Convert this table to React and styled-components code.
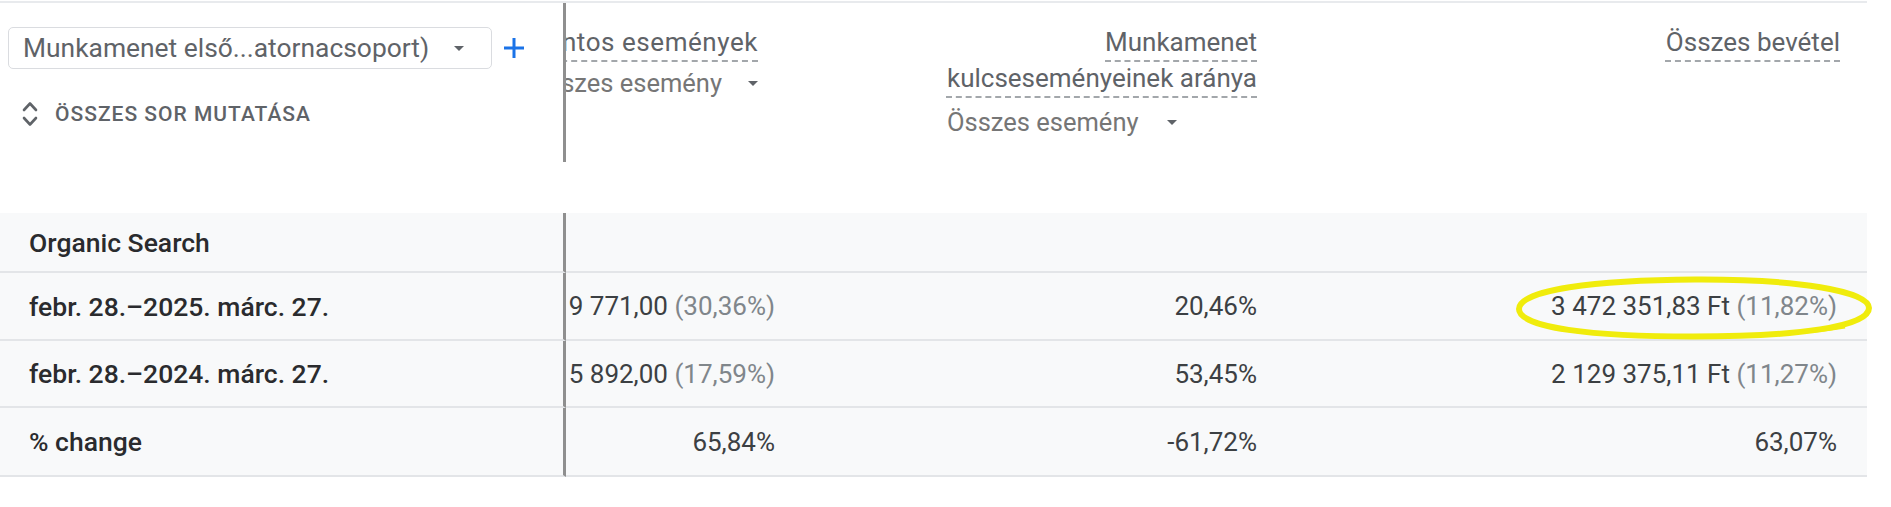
import React from "react";
import styled, { createGlobalStyle } from "styled-components";

const Global = createGlobalStyle`
  html, body { margin: 0; padding: 0; background: #ffffff; }
  body { font-family: Roboto, "Noto Sans", "Liberation Sans", Arial, sans-serif; }
  * { box-sizing: border-box; }
`;

const COLS = "566px 234px 482px 585px";

const Card = styled.div`
  width: 1867px;
  padding-top: 1px;
`;

const HeaderGrid = styled.div`
  display: grid;
  grid-template-columns: ${COLS};
  height: 161px;
  border-top: 2px solid #e8eaed;
`;

const StickyHead = styled.div`
  display: flex;
  flex-direction: column;
  padding: 24px 0 0 8px;
  border-right: 3px solid #8f8f8f;
`;

const PickerRow = styled.div`
  display: flex;
  align-items: center;
  gap: 11px;
`;

const Picker = styled.div`
  width: 484px;
  height: 42px;
  display: flex;
  align-items: center;
  justify-content: space-between;
  padding: 0 27px 0 14px;
  border: 1px solid #dadce0;
  border-radius: 5px;
  font-size: 26.4px;
  color: #5f6368;
  white-space: nowrap;
`;

const Caret = styled.span`
  display: inline-block;
  width: 0;
  height: 0;
  border-left: 5px solid transparent;
  border-right: 5px solid transparent;
  border-top: 5px solid #5f6368;
  margin-left: ${(p) => p.$ml || 0}px;
  flex-shrink: 0;
`;

const ShowAll = styled.div`
  margin-top: 31px;
  display: flex;
  align-items: center;
  gap: 17px;
  padding-left: 14px;
  font-size: 21px;
  font-weight: 500;
  letter-spacing: 1px;
  color: #5f6368;
  text-transform: uppercase;
`;

const HeadCell = styled.div`
  display: flex;
  justify-content: flex-end;
  align-items: flex-start;
  padding: 21px ${(p) => p.$pr}px 0 0;
  overflow: hidden;
`;

const HeadBlock = styled.div`
  display: flex;
  flex-direction: column;
  align-items: flex-start;
  flex-shrink: 0;
`;

const Title = styled.div`
  align-self: stretch;
  text-align: right;
  white-space: nowrap;
  font-size: 26px;
  font-weight: 400;
  line-height: 36px;
  letter-spacing: ${(p) => p.$track || 0}px;
  color: #5f6368;
  text-decoration: underline dashed #a3a7ab;
  text-decoration-thickness: 2px;
  text-underline-offset: 9px;
`;

const SubSelect = styled.div`
  display: flex;
  align-items: center;
  margin-top: ${(p) => p.$mt || 0}px;
  font-size: 25.5px;
  line-height: 36px;
  color: #767676;
  white-space: nowrap;
`;

const Spacer = styled.div`
  height: 51px;
`;

const Body = styled.div`
  background: #f8f9fa;
`;

const Row = styled.div`
  display: grid;
  grid-template-columns: ${COLS};
  height: ${(p) => p.$h}px;
`;

const LabelCell = styled.div`
  display: flex;
  align-items: center;
  padding-left: 29px;
  font-size: 26.5px;
  font-weight: 500;
  color: #2a2b2e;
  white-space: nowrap;
  border-right: 3px solid #8f8f8f;
  border-bottom: 2px solid #e3e5e8;
`;

const ValueCell = styled.div`
  display: flex;
  align-items: center;
  justify-content: flex-end;
  padding-right: ${(p) => p.$pr}px;
  overflow: ${(p) => (p.$clip ? "hidden" : "visible")};
  white-space: nowrap;
  font-size: 26px;
  color: #3c4043;
  border-bottom: 2px solid #e3e5e8;
`;

const ValueText = styled.span`
  position: relative;
  flex-shrink: 0;
`;

const Share = styled.span`
  color: #80868b;
`;

const Ring = styled.svg`
  position: absolute;
  left: -36px;
  top: -15px;
  width: 358px;
  height: 64px;
  overflow: visible;
  pointer-events: none;
`;

const PlusIcon = () => (
  <svg width="22" height="22" viewBox="0 0 22 22">
    <path d="M11 1 V21 M1 11 H21" stroke="#1a73e8" strokeWidth="3" fill="none" />
  </svg>
);

const UnfoldIcon = () => (
  <svg width="16" height="28" viewBox="0 0 16 28">
    <path
      d="M2 10 L8 3.5 L14 10 M2 18 L8 24.5 L14 18"
      stroke="#5f6368"
      strokeWidth="2.6"
      fill="none"
      strokeLinecap="round"
      strokeLinejoin="round"
    />
  </svg>
);

const Value = ({ main, share, ring }) => (
  <ValueText>
    {main}
    {share && <Share> ({share})</Share>}
    {ring && (
      <Ring viewBox="0 0 358 64">
        <path
          d="M180 3.5 C 282 3, 354 15, 354 32 C 354 51, 282 60.5, 178 60.5 C 78 60.5, 4 52, 4 33 C 4 14, 80 4, 180 3.5 Z"
          fill="none"
          stroke="#f0ec0c"
          strokeWidth="6"
        />
        <path
          d="M36 52 C 90 62, 260 63, 330 51"
          fill="none"
          stroke="#f0ec0c"
          strokeWidth="3"
        />
      </Ring>
    )}
  </ValueText>
);

const rows = [
  { h: 60, label: "Organic Search", cells: [null, null, null] },
  {
    h: 68,
    label: "febr. 28.–2025. márc. 27.",
    cells: [
      { main: "9 771,00", share: "30,36%" },
      { main: "20,46%" },
      { main: "3 472 351,83 Ft", share: "11,82%", ring: true },
    ],
  },
  {
    h: 67,
    label: "febr. 28.–2024. márc. 27.",
    cells: [
      { main: "5 892,00", share: "17,59%" },
      { main: "53,45%" },
      { main: "2 129 375,11 Ft", share: "11,27%" },
    ],
  },
  {
    h: 69,
    label: "% change",
    cells: [{ main: "65,84%" }, { main: "-61,72%" }, { main: "63,07%" }],
  },
];

const pads = [25, 25, 30];

export default function App() {
  return (
    <>
      <Global />
      <Card>
        <HeaderGrid>
          <StickyHead>
            <PickerRow>
              <Picker>
                <span>Munkamenet első...atornacsoport)</span>
                <Caret />
              </Picker>
              <PlusIcon />
            </PickerRow>
            <ShowAll>
              <UnfoldIcon />
              <span>Összes sor mutatása</span>
            </ShowAll>
          </StickyHead>
          <HeadCell $pr={42}>
            <HeadBlock>
              <Title $track={0.55}>Fontos események</Title>
              <SubSelect $mt={5}>
                Összes esemény
                <Caret $ml={26} />
              </SubSelect>
            </HeadBlock>
          </HeadCell>
          <HeadCell $pr={25}>
            <HeadBlock>
              <Title>
                Munkamenet
                <br />
                kulcseseményeinek aránya
              </Title>
              <SubSelect $mt={8}>
                Összes esemény
                <Caret $ml={28} />
              </SubSelect>
            </HeadBlock>
          </HeadCell>
          <HeadCell $pr={27}>
            <HeadBlock>
              <Title>Összes bevétel</Title>
            </HeadBlock>
          </HeadCell>
        </HeaderGrid>
        <Spacer />
        <Body>
          {rows.map((r) => (
            <Row key={r.label} $h={r.h}>
              <LabelCell>{r.label}</LabelCell>
              {r.cells.map((c, i) => (
                <ValueCell key={i} $pr={pads[i]} $clip={i === 0}>
                  {c && <Value {...c} />}
                </ValueCell>
              ))}
            </Row>
          ))}
        </Body>
      </Card>
    </>
  );
}
